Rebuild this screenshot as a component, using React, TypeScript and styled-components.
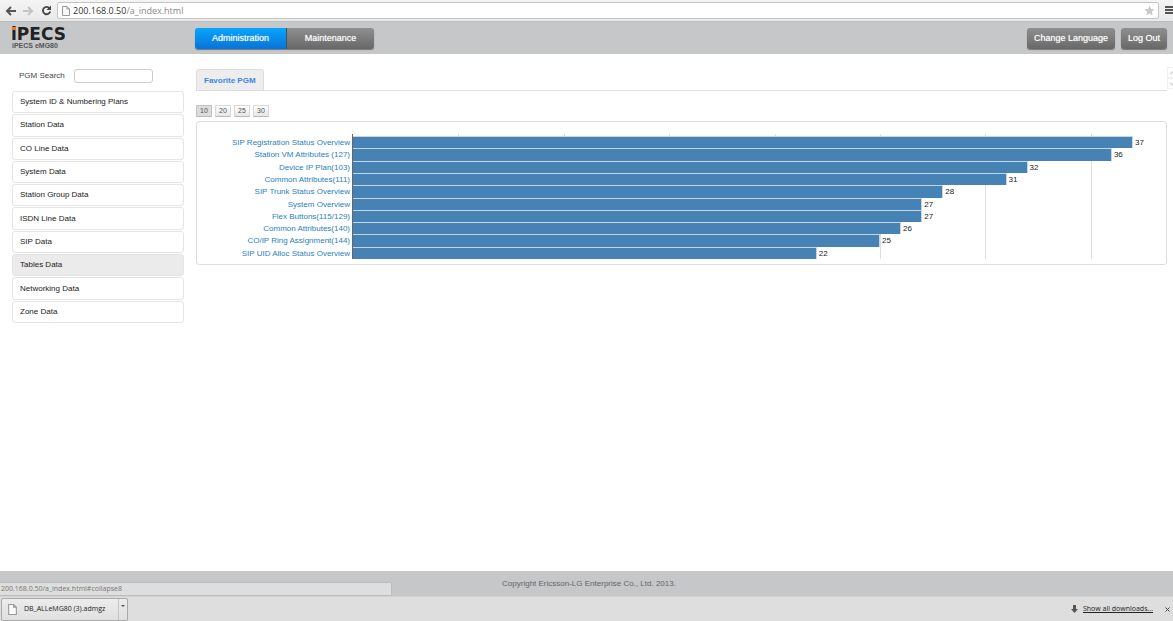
import React, { useState } from "react";
import styled, { createGlobalStyle, css } from "styled-components";

const GlobalStyle = createGlobalStyle`
  *, *::before, *::after { box-sizing: border-box; }
  body {
    margin: 0;
    background: #fff;
    color: #333;
    font: 8px/12px "Liberation Sans", Arial, sans-serif;
  }
  button, input { font: inherit; color: inherit; }
  a { color: inherit; text-decoration: none; }
`;

const uiFont = `"Open Sans", "Noto Sans", sans-serif`;

const Page = styled.div`
  display: flex;
  flex-direction: column;
  min-height: 100vh;
  overflow: hidden;
`;

/* Browser toolbar */

const Toolbar = styled.div`
  display: flex;
  align-items: center;
  height: 22px;
  padding-left: 1px;
  background: linear-gradient(#f4f4f4, #e9e9e9);
  border-bottom: 1px solid #bbbcbe;
`;

const ToolButton = styled.button`
  display: flex;
  align-items: center;
  justify-content: center;
  flex: none;
  width: 18px;
  height: 18px;
  padding: 0;
  border: 0;
  background: none;
`;

const AddressBar = styled.div`
  display: flex;
  align-items: center;
  flex: 1;
  height: 17px;
  margin: 0 6px 0 2px;
  padding-left: 4px;
  border: 1px solid #c4c4c4;
  border-radius: 2px;
  background: #fff;
`;

const Address = styled.span`
  flex: 1;
  margin-left: 3px;
  color: #888;
  font: 9px/14px ${uiFont};

  b { color: #333; font-weight: 400; }
`;

const MenuButton = styled(ToolButton)`
  width: 8px;
`;

/* Site header */

const Header = styled.header`
  display: flex;
  align-items: center;
  height: 32px;
  padding-right: 6px;
  background: #c6c7c9;
`;

const Brand = styled.div`
  flex: none;
  width: 195px;
  padding-left: 12px;
  color: #555;
  font-weight: 700;
  font-size: 7px;
  line-height: 9px;
`;

const Logo = styled.svg`
  display: block;
  overflow: visible;
  font: 700 17px "DejaVu Sans", sans-serif;
`;

const Nav = styled.nav`
  display: flex;
  flex: 1;
`;

const glossy = css`
  height: 21px;
  border: 0;
  background: linear-gradient(#8f8f8f, #686868);
  box-shadow: 0 1px 1px #77777a;
  color: #fff;
  font-size: 9px;
  line-height: 21px;
  text-align: center;
  text-shadow: 0 0 1px rgba(255, 255, 255, 0.7);
`;

const NavLink = styled.a<{ $active?: boolean }>`
  ${glossy}
  width: ${(p) => (p.$active ? 92 : 87)}px;
  border-radius: ${(p) => (p.$active ? "3px 0 0 3px" : "0 3px 3px 0")};
  ${(p) =>
    p.$active &&
    css`
      background: linear-gradient(#08a5fc, #0873d8);
      border-right: 1px solid #33516e;
    `}
`;

const HeaderButton = styled.button`
  ${glossy}
  margin-left: 6px;
  padding: 0 7px;
  border-radius: 3px;
`;

/* Body */

const Body = styled.div`
  display: flex;
  flex: 1;
  align-items: flex-start;
  gap: 12px;
  padding: 15px 0 16px 12px;
`;

const Sidebar = styled.aside`
  flex: none;
  width: 172px;
`;

const SearchLabel = styled.label`
  display: flex;
  align-items: center;
  gap: 9px;
  height: 14px;
  margin-bottom: 8px;
  padding-left: 7px;
  color: #444;
`;

const SearchInput = styled.input`
  width: 79px;
  height: 14px;
  padding: 0 3px;
  border: 1px solid #ccc;
  border-radius: 3px;
  background: #fff;
`;

const Menu = styled.ul`
  display: grid;
  grid-template-rows: repeat(10, 1fr);
  gap: 1px;
  height: 232px;
  margin: 0;
  padding: 0;
  list-style: none;
`;

const MenuLink = styled.a<{ $hovered?: boolean }>`
  display: flex;
  align-items: center;
  height: 100%;
  padding: 0 7px;
  border: 1px solid #e5e5e5;
  border-radius: 3px;
  background: ${(p) => (p.$hovered ? "#ebebeb" : "#fff")};
  color: #222;
`;

const Content = styled.main`
  flex: 1;
  min-width: 0;
`;

const TabRow = styled.div`
  display: flex;
`;

const Tabs = styled.div`
  display: flex;
  flex: 1;
  height: 22px;
  border-bottom: 1px solid #ddd;
`;

const Tab = styled.a`
  padding: 0 7px;
  border: 1px solid #ddd;
  border-bottom: 0;
  border-radius: 3px 3px 0 0;
  background: #ededed;
  color: #3b86ea;
  font-weight: 700;
  line-height: 21px;
`;

const Scroller = styled.div`
  display: flex;
  flex-direction: column;
  flex: none;
  width: 6px;
  margin-top: -2px;
  overflow: hidden;
`;

const ScrollButton = styled.button`
  display: flex;
  align-items: center;
  width: 12px;
  height: 11px;
  padding: 0 0 0 2px;
  border: 1px solid #f0f0f0;
  background: #fff;
`;

const Sizes = styled.div`
  display: flex;
  gap: 3px;
  margin: 14px 0 4px;
`;

const SizeButton = styled.button<{ $active: boolean }>`
  width: 16px;
  height: 12px;
  padding: 0;
  border: 1px solid ${(p) => (p.$active ? "#c2c2c2" : "#d8d8d8")};
  border-bottom-color: #b8b8b8;
  border-radius: 1px;
  background: ${(p) => (p.$active ? "#dcdcdc" : "linear-gradient(#fff, #e6e6e6)")};
  color: #555;
  font-size: 7px;
  line-height: 10px;
  text-align: center;
`;

const Panel = styled.section`
  margin-right: 6px;
  padding: 12px 33px 5px 0;
  border: 1px solid #ddd;
  border-radius: 3px;
`;

const Chart = styled.div`
  display: grid;
  grid-template-columns: 155px 1fr;
  grid-template-rows: 125px;
`;

const Names = styled.div`
  display: grid;
  grid-template-rows: repeat(10, minmax(0, 1fr));
  padding: 2px 2px 0 0;
  text-align: right;
  line-height: 13px;
  color: #2a7fc0;
`;

const Plot = styled.div`
  position: relative;
  display: grid;
  grid-template-rows: repeat(10, minmax(0, 1fr));
  padding-top: 2px;
  border-left: 1px solid #666;
`;

const GridLine = styled.i`
  position: absolute;
  top: 0;
  bottom: 0;
  width: 1px;
  background: #ddd;
`;

const BarRow = styled.div`
  position: relative;
  display: flex;
  align-items: stretch;
`;

const Bar = styled.div`
  flex: none;
  border-top: 1px solid #c3d6e6;
  border-right: 1px solid #c3d6e6;
  background: #4682b4;
`;

const Value = styled.span`
  margin-left: 2px;
  color: #222;
  line-height: 13px;
`;

/* Footer */

const Footer = styled.footer`
  position: relative;
  height: 25px;
  padding-left: 5px;
  background: #c6c7c9;
  color: #666;
  text-align: center;
  line-height: 25px;
`;

const StatusBubble = styled.div`
  position: absolute;
  left: 0;
  bottom: 0;
  width: 392px;
  max-width: 100%;
  height: 14px;
  padding-left: 1px;
  border: solid #bcbcbc;
  border-width: 1px 1px 1px 0;
  border-radius: 0 2px 0 0;
  background: #dedede;
  color: #777;
  font: 7px/12px ${uiFont};
  text-align: left;
`;

const Downloads = styled.div`
  display: flex;
  align-items: center;
  height: 25px;
  padding: 0 3px 0 1px;
  border-top: 1px solid #d2d2d2;
  background: #dedede;
  color: #222;
  font: 7px/12px ${uiFont};
`;

const Download = styled.div`
  display: flex;
  width: 127px;
  height: 23px;
  border: 1px solid #aaa;
  border-radius: 2px;
  background: linear-gradient(#ececec, #e0e0e0);
`;

const FileButton = styled.button`
  display: flex;
  align-items: center;
  flex: 1;
  gap: 7px;
  padding: 0 0 0 6px;
  border: 0;
  background: none;
`;

const FileMenu = styled.button`
  width: 9px;
  padding: 0 0 6px;
  border: 0;
  border-left: 1px solid #c4c4c4;
  background: none;

  svg { display: block; margin: 0 auto; }
`;

const AllDownloads = styled.a`
  display: flex;
  align-items: center;
  gap: 5px;
  margin-left: auto;

  span { text-decoration: underline; }
`;

const CloseButton = styled(ToolButton)`
  width: 6px;
  margin-left: 11px;
`;

const menu = [
  "System ID & Numbering Plans",
  "Station Data",
  "CO Line Data",
  "System Data",
  "Station Group Data",
  "ISDN Line Data",
  "SIP Data",
  "Tables Data",
  "Networking Data",
  "Zone Data",
];

const usage: [string, number][] = [
  ["SIP Registration Status Overview", 37],
  ["Station VM Attributes (127)", 36],
  ["Device IP Plan(103)", 32],
  ["Common Attributes(111)", 31],
  ["SIP Trunk Status Overview", 28],
  ["System Overview", 27],
  ["Flex Buttons(115/129)", 27],
  ["Common Attributes(140)", 26],
  ["CO/IP Ring Assignment(144)", 25],
  ["SIP UID Alloc Status Overview", 22],
];

const peak = 37;
const share = (n: number) => `${(n / peak) * 100}%`;

const Arrow = ({ color, flip }: { color: string; flip?: boolean }) => (
  <svg width="11" height="10" viewBox="0 0 11 10" fill="none" stroke={color} strokeWidth="2">
    <path d={flip ? "M0 5H9M5 1l4 4-4 4" : "M11 5H2M6 1L2 5l4 4"} />
  </svg>
);

const PageIcon = ({ width, height }: { width: number; height: number }) => (
  <svg width={width} height={height} viewBox="0 0 8 10" fill="#fafafa" stroke="#999">
    <path d="M.5.5h4.500l2.500 2.500v6.500h-7zM5 .5V3h2.500" />
  </svg>
);

export default function App() {
  const [size, setSize] = useState(10);
  return (
    <Page>
      <GlobalStyle />
      <Toolbar>
        <ToolButton aria-label="Back">
          <Arrow color="#555" />
        </ToolButton>
        <ToolButton aria-label="Forward">
          <Arrow color="#c4c4c4" flip />
        </ToolButton>
        <ToolButton aria-label="Reload">
          <svg width="11" height="11" viewBox="0 0 11 11">
            <path d="M8.500 3.200A3.700 3.700 0 1 0 9.200 6.500" fill="none" stroke="#444" strokeWidth="1.800" />
            <path d="M10 .5v4.500H5.500z" fill="#444" />
          </svg>
        </ToolButton>
        <AddressBar>
          <PageIcon width={8} height={10} />
          <Address>
            <b>200.168.0.50</b>/a_index.html
          </Address>
          <ToolButton aria-label="Bookmark">
            <svg width="11" height="11" viewBox="0 0 12 12">
              <path d="M6 .5l1.600 3.900 4.100.3-3.200 2.700 1 4.100L6 9.300l-3.500 2.200 1-4.100L.3 4.700l4.100-.3z" fill="#c8c8c8" />
            </svg>
          </ToolButton>
        </AddressBar>
        <MenuButton aria-label="Menu">
          <svg width="8" height="9" viewBox="0 0 8 9" fill="#555">
            <path d="M0 0h8v2H0zM0 3h8v2H0zM0 6h8v2H0z" />
          </svg>
        </MenuButton>
      </Toolbar>

      <Header>
        <Brand>
          <Logo width="72" height="14" viewBox="0 0 72 14" role="img" aria-label="iPECS">
            <text x="-1" y="13" fill="#222">
              iPECS
            </text>
            <rect x="0" y="0" width="4" height="3" fill="#f07a22" />
          </Logo>
          iPECS eMG80
        </Brand>
        <Nav>
          <NavLink href="#administration" $active>
            Administration
          </NavLink>
          <NavLink href="#maintenance">Maintenance</NavLink>
        </Nav>
        <HeaderButton>Change Language</HeaderButton>
        <HeaderButton>Log Out</HeaderButton>
      </Header>

      <Body>
        <Sidebar>
          <SearchLabel>
            PGM Search
            <SearchInput type="text" />
          </SearchLabel>
          <Menu>
            {menu.map((name, i) => (
              <li key={name}>
                <MenuLink href={`#collapse${i + 1}`} $hovered={name === "Tables Data"}>
                  {name}
                </MenuLink>
              </li>
            ))}
          </Menu>
        </Sidebar>

        <Content>
          <TabRow>
            <Tabs>
              <Tab href="#favorite">Favorite PGM</Tab>
            </Tabs>
            <Scroller>
              <ScrollButton aria-label="Scroll up">
                <svg width="6" height="4" viewBox="0 0 6 4" fill="none" stroke="#aaa">
                  <path d="M0 3.500l3-3 3 3" />
                </svg>
              </ScrollButton>
              <ScrollButton aria-label="Scroll down">
                <svg width="6" height="4" viewBox="0 0 6 4" fill="none" stroke="#aaa">
                  <path d="M0 .5l3 3 3-3" />
                </svg>
              </ScrollButton>
            </Scroller>
          </TabRow>
          <Sizes>
            {[10, 20, 25, 30].map((n) => (
              <SizeButton key={n} $active={n === size} onClick={() => setSize(n)}>
                {n}
              </SizeButton>
            ))}
          </Sizes>
          <Panel>
            <Chart>
              <Names>
                {usage.map(([name]) => (
                  <a key={name} href="#pgm">
                    {name}
                  </a>
                ))}
              </Names>
              <Plot>
                {[5, 10, 15, 20, 25, 30, 35].map((n) => (
                  <GridLine key={n} style={{ left: share(n) }} />
                ))}
                {usage.map(([name, count]) => (
                  <BarRow key={name}>
                    <Bar style={{ width: share(count) }} />
                    <Value>{count}</Value>
                  </BarRow>
                ))}
              </Plot>
            </Chart>
          </Panel>
        </Content>
      </Body>

      <Footer>
        Copyright Ericsson-LG Enterprise Co., Ltd. 2013.
        <StatusBubble>200.168.0.50/a_index.html#collapse8</StatusBubble>
      </Footer>

      <Downloads>
        <Download>
          <FileButton>
            <PageIcon width={9} height={11} />
            DB_ALLeMG80 (3).admgz
          </FileButton>
          <FileMenu aria-label="Download options">
            <svg width="4" height="2" viewBox="0 0 4 2" fill="#555">
              <path d="M0 0h4L2 2z" />
            </svg>
          </FileMenu>
        </Download>
        <AllDownloads href="#downloads">
          <svg width="7" height="8" viewBox="0 0 7 8" fill="#555">
            <path d="M2 0h3v4h2L3.500 8 0 4h2z" />
          </svg>
          <span>Show all downloads...</span>
        </AllDownloads>
        <CloseButton aria-label="Close">
          <svg width="5" height="5" viewBox="0 0 5 5" stroke="#444">
            <path d="M.5.5l4 4M4.500.5l-4 4" />
          </svg>
        </CloseButton>
      </Downloads>
    </Page>
  );
}
